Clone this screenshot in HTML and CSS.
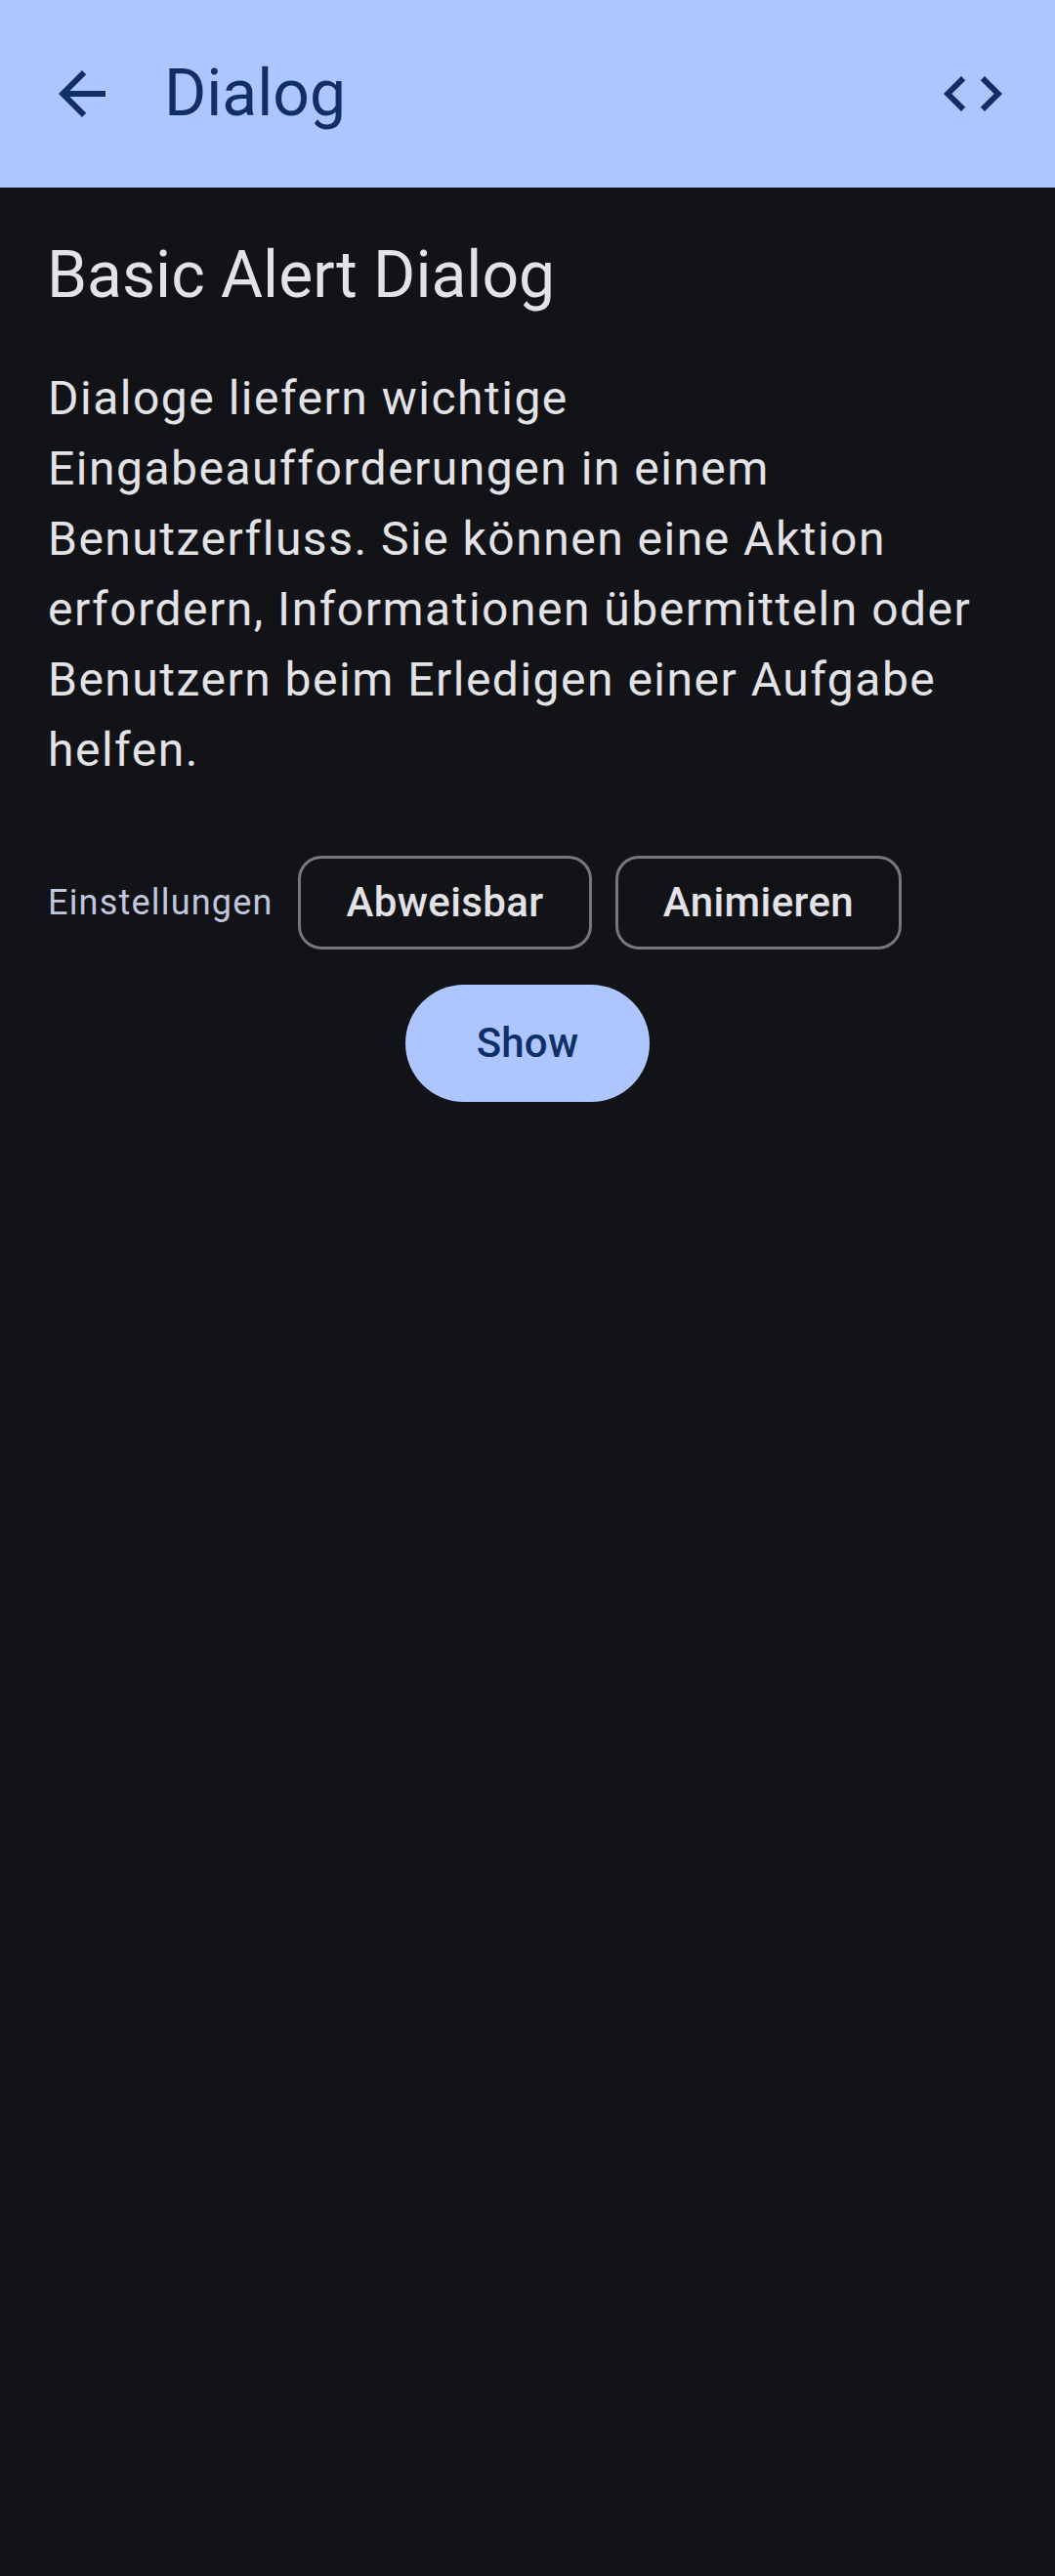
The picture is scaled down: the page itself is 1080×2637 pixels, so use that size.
FILE: index.html
```
<!DOCTYPE html>
<html lang="de">
<head>
<meta charset="utf-8">
<title>Dialog</title>
<link rel="stylesheet" href="styles.css">
</head>
<body>
<header class="app-bar">
  <svg class="icon" viewBox="0 0 24 24" aria-hidden="true"><path d="M20 11H7.83l5.59-5.59L12 4l-8 8 8 8 1.41-1.41L7.83 13H20v-2z"/></svg>
  <h1 class="app-title">Dialog</h1>
  <svg class="icon" viewBox="0 0 24 24" aria-hidden="true"><path d="M9.4 16.6L4.8 12l4.6-4.6L8 6l-6 6 6 6 1.4-1.4zm5.2 0l4.6-4.6-4.6-4.6L16 6l6 6-6 6-1.4-1.4z"/></svg>
</header>
<main class="content">
  <h2 class="heading">Basic Alert Dialog</h2>
  <p class="description">Dialoge liefern wichtige<br>Eingabeaufforderungen in einem<br>Benutzerfluss. Sie können eine Aktion<br>erfordern, Informationen übermitteln oder<br>Benutzern beim Erledigen einer Aufgabe<br>helfen.</p>
  <div class="settings">
    <span class="label">Einstellungen</span>
    <button class="chip chip-dismiss">Abweisbar</button>
    <button class="chip chip-animate">Animieren</button>
  </div>
  <button class="show">Show</button>
</main>
</body>
</html>
```

FILE: styles.css
```
* { box-sizing: border-box; }
body {
  margin: 0;
  min-height: 2637px;
  background: #121316;
  color: #e3e2e6;
  font-family: Roboto, sans-serif;
}
h1, h2, p { margin: 0; font-weight: 400; }
button { font-family: inherit; padding: 0; }
.app-bar {
  display: flex;
  align-items: center;
  height: 192px;
  padding: 0 48px;
  background: #adc6ff;
  color: #102f67;
}
.icon { width: 72px; height: 72px; fill: currentColor; }
.app-title { flex: 1; margin-left: 48px; font-size: 66px; line-height: 84px; }
.content {
  display: flex;
  flex-direction: column;
  align-items: flex-start;
  padding: 48px;
}
.heading { font-size: 66px; line-height: 84px; }
.description {
  margin-top: 48px;
  padding-left: 1px;
  font-size: 48px;
  line-height: 72px;
  letter-spacing: 1.5px;
  white-space: nowrap;
}
.settings { display: flex; align-items: center; gap: 24px; margin-top: 72px; }
.label {
  width: 233px;
  padding-left: 1px;
  color: #c1c6dd;
  font-size: 36px;
  line-height: 48px;
  letter-spacing: 1.2px;
}
.chip {
  height: 96px;
  padding-bottom: 2px;
  border: 3px solid #77777a;
  border-radius: 24px;
  background: transparent;
  color: #e3e2e6;
  font-size: 42px;
  font-weight: 500;
  letter-spacing: 0.4px;
}
.chip-dismiss { width: 301px; }
.chip-animate { width: 293px; }
.show {
  align-self: center;
  width: 250px;
  height: 120px;
  margin-top: 36px;
  padding-bottom: 2px;
  border: 0;
  border-radius: 60px;
  background: #adc6ff;
  color: #102f67;
  font-size: 42px;
  font-weight: 500;
  letter-spacing: 0.2px;
}
```
